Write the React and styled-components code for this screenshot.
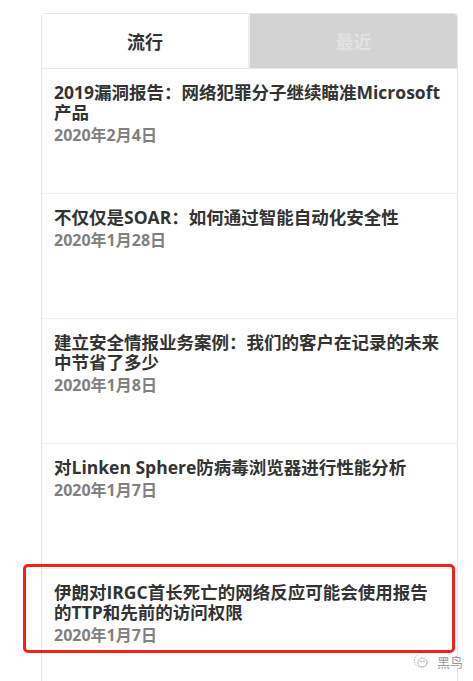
import React from 'react';
import styled, { createGlobalStyle } from 'styled-components';

const GlobalStyle = createGlobalStyle`
  html, body {
    margin: 0;
    padding: 0;
    background: #fff;
    font-family: "Open Sans", "Noto Sans CJK SC", sans-serif;
  }
`;

const posts = [
  { title: '2019漏洞报告：网络犯罪分子继续瞄准Microsoft产品', date: '2020年2月4日' },
  { title: '不仅仅是SOAR：如何通过智能自动化安全性', date: '2020年1月28日' },
  { title: '建立安全情报业务案例：我们的客户在记录的未来中节省了多少', date: '2020年1月8日' },
  { title: '对Linken Sphere防病毒浏览器进行性能分析', date: '2020年1月7日' },
  { title: '伊朗对IRGC首长死亡的网络反应可能会使用报告的TTP和先前的访问权限', date: '2020年1月7日', marked: true },
];

function App() {
  return (
    <Page>
      <GlobalStyle />
      <Card>
        <Tabs>
          <Tab active>流行</Tab>
          <Tab>最近</Tab>
        </Tabs>
        {posts.map((post) => (
          <Row key={post.title}>
            <Title>{post.title}</Title>
            <Date>{post.date}</Date>
            {post.marked && <Highlight />}
          </Row>
        ))}
      </Card>
      <Watermark>
        <svg width="20" height="20" viewBox="0 0 20 20" fill="none" stroke="#bbb" strokeWidth="1">
          <path d="M7 4 A6.5 6.5 0 1 0 16.5 10" strokeDasharray="1.5 1.2" />
          <circle cx="11.5" cy="11.5" r="4.5" />
          <circle cx="10" cy="10.5" r="0.6" fill="#bbb" />
          <circle cx="13" cy="10.5" r="0.6" fill="#bbb" />
        </svg>
        <span>黑鸟</span>
      </Watermark>
    </Page>
  );
}

export default App;

const Page = styled.div`
  position: relative;
  height: 681px;
  overflow: hidden;
  padding: 13px 0 0 41px;
  box-sizing: border-box;
`;

const Card = styled.div`
  width: 417px;
  box-sizing: border-box;
  border: 1px solid #e6e6e6;
  border-bottom: none;
  border-radius: 4px 4px 0 0;
  height: 700px;
`;

const Tabs = styled.div`
  display: grid;
  grid-template-columns: 206px 1fr;
  height: 54px;
  border-bottom: 1px solid #eaeaea;
`;

const Tab = styled.div`
  display: flex;
  align-items: center;
  justify-content: center;
  font-size: 18px;
  font-weight: 700;
  color: ${(p) => (p.active ? '#333' : '#e2e2e2')};
  background: ${(p) => (p.active ? '#fff' : '#d3d3d3')};
  border-left: ${(p) => (p.active ? 'none' : '2px solid #efefef')};
  border-top-right-radius: ${(p) => (p.active ? '0' : '4px')};
`;

const Row = styled.div`
  position: relative;
  box-sizing: border-box;
  height: 125px;
  padding: 13px 12px 0;
  border-bottom: 1px solid #f1f1f1;
`;

const Title = styled.div`
  font-size: 17.5px;
  font-weight: 700;
  line-height: 20px;
  color: #333;
`;

const Date = styled.div`
  margin-top: 3px;
  font-size: 16px;
  font-weight: 700;
  line-height: 20px;
  color: #808080;
`;

const Highlight = styled.div`
  position: absolute;
  left: -19px;
  top: -5px;
  width: 432px;
  height: 89px;
  box-sizing: border-box;
  border: 3px solid #f5201c;
  border-radius: 5px;
`;

const Watermark = styled.div`
  position: absolute;
  left: 411px;
  top: 651px;
  display: flex;
  align-items: center;
  gap: 6px;
  font-size: 13px;
  color: #999;
  font-family: "Noto Sans CJK SC", sans-serif;
`;
